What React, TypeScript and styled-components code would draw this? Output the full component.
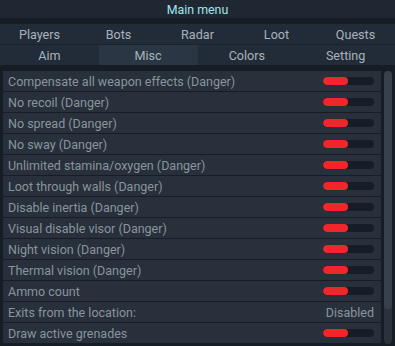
import React from "react";
import styled, { createGlobalStyle } from "styled-components";

const GlobalStyle = createGlobalStyle`
  html, body {
    margin: 0;
    padding: 0;
    background: #161d25;
    font-family: Roboto, "Noto Sans", sans-serif;
  }
`;

const Window = styled.div`
  width: 395px;
  height: 346px;
  display: flex;
  flex-direction: column;
  background: #161d25;
  overflow: hidden;
`;

const TitleBar = styled.div`
  height: 18px;
  display: flex;
  align-items: center;
  justify-content: center;
  background: #1f2832;
  color: #a3e4ec;
  font-size: 12.4px;
  margin-bottom: 6px;
`;

const TabRow = styled.div<{ $cols: number }>`
  display: grid;
  grid-template-columns: repeat(${(p) => p.$cols}, 1fr);
  height: 20px;
  background: #222c38;
`;

const Tab = styled.div<{ $active?: boolean }>`
  display: flex;
  align-items: center;
  justify-content: center;
  font-size: 12.6px;
  color: #a9b2bb;
  background: ${(p) => (p.$active ? "#2a3644" : "transparent")};
`;

const Divider = styled.div`
  height: 1px;
  background: #1a222b;
`;

const Body = styled.div`
  display: flex;
  gap: 3px;
  padding: 6px 3px 0 3px;
  flex: 1;
  min-height: 0;
`;

const List = styled.div`
  flex: 1;
  display: flex;
  flex-direction: column;
  gap: 1px;
`;

const Row = styled.div`
  height: 20px;
  flex-shrink: 0;
  display: flex;
  align-items: center;
  justify-content: space-between;
  padding: 0 7px 0 5px;
  background: #27303b;
  color: #8b949d;
  font-size: 12.5px;
`;

const Toggle = styled.div`
  width: 51px;
  height: 8px;
  border-radius: 4px;
  background: #161d26;
  overflow: hidden;
`;

const ToggleFill = styled.div`
  width: 25px;
  height: 100%;
  border-radius: 4px;
  background: #f0262b;
`;

const Value = styled.span`
  color: #8b949d;
`;

const Scroll = styled.div`
  width: 8px;
  height: 273px;
  border-radius: 4px;
  background: #29323d;
  display: flex;
  flex-direction: column;
`;

const Thumb = styled.div`
  height: 238px;
  border-radius: 4px;
  background: #37414d;
`;

const topTabs = ["Players", "Bots", "Radar", "Loot", "Quests"];
const subTabs = ["Aim", "Misc", "Colors", "Setting"];

const items: { label: string; value?: string }[] = [
  { label: "Compensate all weapon effects (Danger)" },
  { label: "No recoil (Danger)" },
  { label: "No spread (Danger)" },
  { label: "No sway (Danger)" },
  { label: "Unlimited stamina/oxygen (Danger)" },
  { label: "Loot through walls (Danger)" },
  { label: "Disable inertia (Danger)" },
  { label: "Visual disable visor (Danger)" },
  { label: "Night vision (Danger)" },
  { label: "Thermal vision (Danger)" },
  { label: "Ammo count" },
  { label: "Exits from the location:", value: "Disabled" },
  { label: "Draw active grenades" },
];

export default function App() {
  return (
    <>
      <GlobalStyle />
      <Window>
        <TitleBar>Main menu</TitleBar>
        <TabRow $cols={5}>
          {topTabs.map((t) => (
            <Tab key={t}>{t}</Tab>
          ))}
        </TabRow>
        <Divider />
        <TabRow $cols={4}>
          {subTabs.map((t) => (
            <Tab key={t} $active={t === "Misc"}>
              {t}
            </Tab>
          ))}
        </TabRow>
        <Body>
          <List>
            {items.map((it) => (
              <Row key={it.label}>
                <span>{it.label}</span>
                {it.value ? (
                  <Value>{it.value}</Value>
                ) : (
                  <Toggle>
                    <ToggleFill />
                  </Toggle>
                )}
              </Row>
            ))}
          </List>
          <Scroll>
            <Thumb />
          </Scroll>
        </Body>
      </Window>
    </>
  );
}
